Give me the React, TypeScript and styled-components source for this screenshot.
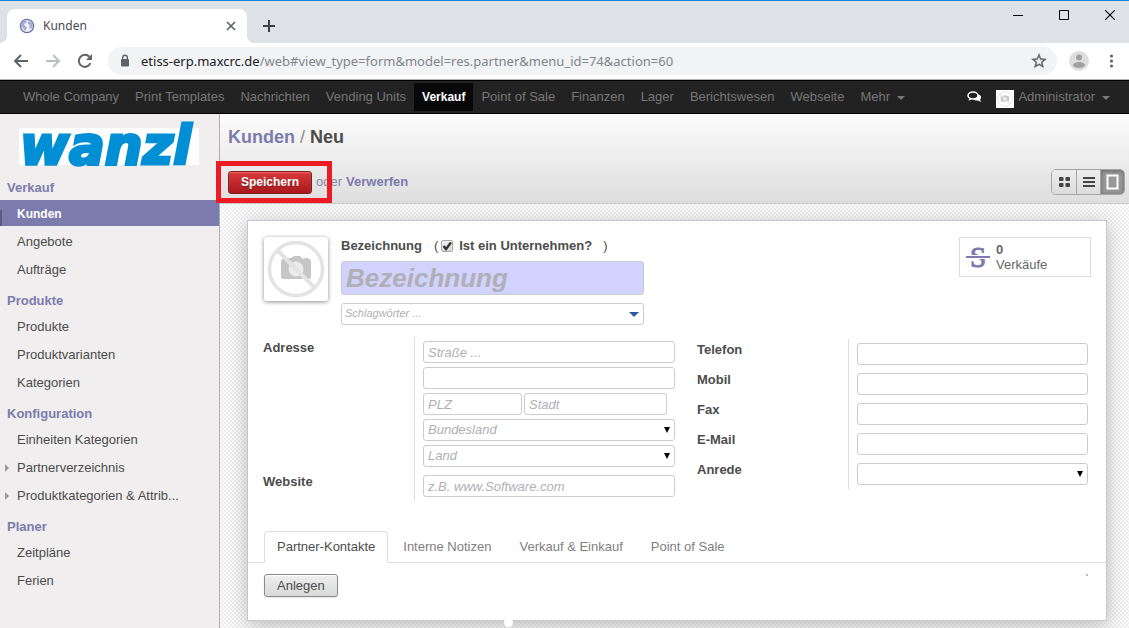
import React from 'react';
import styled, { createGlobalStyle, css } from 'styled-components';

const GlobalStyle = createGlobalStyle`
  *, *::before, *::after { box-sizing: border-box; }
  body { margin: 0; font-family: "Liberation Sans", Arial, sans-serif; font-size: 13px; line-height: 16px; color: #4c4c4c; }
  button, input, select { font: inherit; color: inherit; margin: 0; }
  a { color: inherit; text-decoration: none; }
  ul { list-style: none; margin: 0; padding: 0; }
`;

const Page = styled.div`
  min-height: 100vh;
  display: flex;
  flex-direction: column;
`;

/* ---------- browser window ---------- */

const TabStrip = styled.div`
  display: flex;
  height: 43px;
  padding-left: 7px;
  border-top: 1px solid #1883d7;
  background: #dee1e6;
  font-family: "Noto Sans", "Segoe UI", sans-serif;
`;

const BrowserTab = styled.div`
  position: relative;
  display: flex;
  align-items: center;
  width: 240px;
  margin-top: 8px;
  padding: 0 10px 0 12px;
  border-radius: 8px 8px 0 0;
  background: #fff;
  font-size: 12px;
  color: #45494d;
  &::before, &::after {
    content: "";
    position: absolute;
    bottom: 0;
    width: 8px;
    height: 8px;
  }
  &::before { left: -8px; background: radial-gradient(circle at 0 0, transparent 8px, #fff 8px); }
  &::after { right: -8px; background: radial-gradient(circle at 100% 0, transparent 8px, #fff 8px); }
`;

const TabTitle = styled.span`
  flex: 1;
  margin-left: 8px;
`;

const IconButton = styled.button`
  display: flex;
  align-items: center;
  justify-content: center;
  padding: 0;
  border: 0;
  background: none;
`;

const NewTab = styled(IconButton)`
  width: 28px;
  margin: 8px 0 0 8px;
`;

const WindowButtons = styled.div`
  display: flex;
  align-items: flex-start;
  margin-left: auto;
`;

const WindowButton = styled(IconButton)`
  width: 46px;
  height: 28px;
  &:last-child { width: 42px; padding-left: 4px; }
`;

const AddressBar = styled.div`
  display: flex;
  align-items: center;
  height: 37px;
  padding: 0 9px 0 12px;
  border-bottom: 1px solid #b6b4b6;
  background: #fff;
`;

const BrowserAction = styled(IconButton)`
  width: 18px;
  margin-right: 14px;
`;

const Omnibox = styled.div`
  display: flex;
  flex: 1;
  align-items: center;
  height: 28px;
  margin-right: 12px;
  padding: 0 9px 0 11px;
  border-radius: 14px;
  background: #f1f3f4;
  font-family: "Noto Sans", "Segoe UI", sans-serif;
  font-size: 13px;
  color: #80868b;
`;

const Url = styled.span`
  flex: 1;
  margin-left: 10px;
  b { font-weight: 400; color: #202124; }
`;

/* ---------- main navigation ---------- */

const Nav = styled.nav`
  display: flex;
  justify-content: space-between;
  height: 34px;
  padding: 0 19px 0 15px;
  border-top: 1px solid #000;
  border-bottom: 1px solid #000;
  background: #222;
  color: #777;
`;

const NavList = styled.ul`
  display: flex;
  align-items: center;
`;

const NavLink = styled.a<{ $active?: boolean }>`
  display: flex;
  align-items: center;
  height: 28px;
  padding: 0 8px;
  ${p => p.$active && css`
    background: #080808;
    color: #fff;
    font-size: 12px;
    font-weight: 700;
  `}
`;

const Caret = styled.span`
  margin: 2px 0 0 7px;
  border: 4px solid transparent;
  border-top-color: currentColor;
  border-bottom: 0;
`;

const UserMenu = styled.div`
  display: flex;
  align-items: center;
  > a { display: flex; align-items: center; }
  > a + a { margin-left: 14px; }
`;

const Thumb = styled.span`
  display: flex;
  margin: 4px 4px 0 0;
  background: #fff;
`;

/* ---------- sidebar ---------- */

const Body = styled.div`
  display: flex;
  flex: 1;
`;

const Sidebar = styled.aside`
  flex: none;
  width: 220px;
  padding-top: 14px;
  border-right: 1px solid #afafb6;
  background: #f0eeee;
`;

const Logo = styled.svg`
  display: block;
  margin: 0 0 12px 19px;
  background: #fff;
  overflow: visible;
`;

const SectionTitle = styled.h2`
  margin: 8px 0 3px;
  padding: 2px 0 0 7px;
  font-size: 13px;
  line-height: 18px;
  color: #7c7bad;
`;

const MenuItem = styled.a<{ $active?: boolean; $parent?: boolean }>`
  position: relative;
  display: block;
  margin-bottom: 2px;
  padding: 2px 0 0 17px;
  line-height: 24px;
  ${p => p.$active && css`
    background: #7c7bad;
    color: #fff;
    font-size: 12px;
    font-weight: 700;
    &::before {
      content: "";
      position: absolute;
      left: 0;
      top: 10px;
      width: 2px;
      height: 16px;
      background: #5b5a80;
    }
  `}
  ${p => p.$parent && css`
    &::before {
      content: "";
      position: absolute;
      left: 5px;
      top: 10px;
      border: 4px solid transparent;
      border-left-color: #999;
      border-right: 0;
    }
  `}
`;

/* ---------- view header ---------- */

const Main = styled.main`
  display: flex;
  flex: 1;
  flex-direction: column;
  min-width: 0;
`;

const ViewHeader = styled.header`
  height: 90px;
  padding: 12px 4px 0 8px;
  border-bottom: 1px solid #cacaca;
  background: linear-gradient(#fcfcfc, #dedede);
`;

const Breadcrumb = styled.h1`
  margin: 0;
  font-size: 18px;
  line-height: 22px;
  a { color: #7c7bad; }
  span { font-weight: 400; color: #8a8a8a; }
`;

const ActionRow = styled.div`
  display: flex;
  align-items: center;
  height: 26px;
  margin-top: 21px;
  color: #8a89a0;
`;

const SaveHighlight = styled.div`
  position: relative;
  display: flex;
  margin-right: 4px;
  &::after {
    content: "";
    position: absolute;
    inset: -10px -20px -9px -12px;
    border: 5px solid #ed1c24;
    pointer-events: none;
  }
`;

const PushButton = styled.button<{ $primary?: boolean }>`
  height: 23px;
  padding: 0 12px;
  border: 1px solid #8a8a8a;
  border-radius: 3px;
  background: linear-gradient(#efefef, #d8d8d8);
  box-shadow: 0 1px 2px rgba(0, 0, 0, 0.1), inset 0 1px 1px rgba(255, 255, 255, 0.8);
  line-height: 20px;
  ${p => p.$primary && css`
    border-color: #7f2121;
    background: linear-gradient(#d93b3b, #a8181d);
    box-shadow: inset 0 1px 1px rgba(255, 150, 150, 0.5);
    color: #fff;
    font-size: 12px;
    font-weight: 700;
    text-shadow: 0 1px 1px rgba(0, 0, 0, 0.3);
  `}
`;

const Discard = styled.a`
  margin-left: 4px;
  font-weight: 700;
  color: #7c7bad;
`;

const Switcher = styled.div`
  display: flex;
  height: 26px;
  margin-left: auto;
  border: 1px solid #a5a5a5;
  border-radius: 5px;
  overflow: hidden;
`;

const SwitchButton = styled(IconButton)<{ $on?: boolean }>`
  width: 24px;
  background: ${p => (p.$on ? '#999' : 'linear-gradient(#ededed, #dcdcdc)')};
  box-shadow: ${p => (p.$on ? 'inset 0 1px 4px rgba(0,0,0,.35)' : 'none')};
  & + & { border-left: 1px solid #a5a5a5; }
`;

/* ---------- form sheet ---------- */

const Canvas = styled.section`
  flex: 1;
  padding: 16px 22px 7px 27px;
  background: repeating-conic-gradient(#eee 0 25%, #fcfcfc 0 50%) 0 0 / 4px 4px;
`;

const Sheet = styled.form`
  position: relative;
  min-height: 401px;
  border: 1px solid #c8c8d3;
  background: #fff;
  box-shadow: 0 4px 20px rgba(0, 0, 0, 0.25);
`;

const Handle = styled.span`
  position: absolute;
  left: 256px;
  bottom: -7px;
  width: 9px;
  height: 9px;
  border-radius: 5px;
  background: #fff;
`;

const TitleRow = styled.div`
  display: flex;
  align-items: flex-start;
  padding: 16px 15px 0 16px;
`;

const Avatar = styled.div`
  display: flex;
  width: 64px;
  height: 64px;
  border-radius: 3px;
  box-shadow: 0 1px 4px rgba(0, 0, 0, 0.45);
`;

const TitleFields = styled.div`
  flex: none;
  width: 303px;
  margin-left: 13px;
`;

const TitleLabels = styled.div`
  display: flex;
  align-items: center;
  height: 18px;
  margin-bottom: 6px;
  label { font-weight: 700; }
`;

const Paren = styled.span<{ $open?: boolean }>`
  margin-left: ${p => (p.$open ? 12 : 11)}px;
`;

const CheckWrap = styled.span`
  position: relative;
  display: flex;
  margin: 0 6px 0 3px;
  svg { position: absolute; left: 1px; top: 1px; pointer-events: none; }
`;

const Checkbox = styled.input`
  appearance: none;
  width: 12px;
  height: 12px;
  border: 1px solid #a9a9a9;
  border-radius: 2px;
  background: linear-gradient(#efefef, #dcdcdc);
`;

const Field = styled.input`
  display: block;
  width: 100%;
  min-width: 0;
  height: 22px;
  padding: 0 4px;
  border: 1px solid #ccc;
  border-radius: 3px;
  background: #fff;
  &::placeholder { color: #afafb6; font-style: italic; opacity: 1; }
`;

const NameField = styled(Field)`
  height: 34px;
  margin-bottom: 8px;
  background: #d2d2ff;
  font-size: 26px;
  font-weight: 700;
`;

const TagField = styled(Field)`
  padding: 0 3px 2px;
  font-size: 11px;
`;

const Picker = styled.div<{ $blue?: boolean }>`
  position: relative;
  &::after {
    content: "";
    position: absolute;
    right: 5px;
    top: ${p => (p.$blue ? 9 : 8)}px;
    border: solid transparent;
    border-width: ${p => (p.$blue ? '5px 5px 0' : '6px 3px 0')};
    border-top-color: ${p => (p.$blue ? '#2c5a9c' : '#000')};
    pointer-events: none;
  }
`;

const Select = styled.select`
  display: block;
  appearance: none;
  width: 100%;
  height: 22px;
  padding: 0 4px;
  border: 1px solid #ccc;
  border-radius: 3px;
  background: #fff;
  color: #afafb6;
  font-style: italic;
`;

const StatButton = styled.button`
  display: flex;
  align-items: center;
  width: 132px;
  height: 40px;
  margin-left: auto;
  padding: 0 6px;
  border: 1px solid #dcdcdf;
  background: #fff;
  text-align: left;
  line-height: 15px;
  color: #666;
  svg { margin-right: 6px; }
  b { display: block; }
`;

const Groups = styled.div`
  display: flex;
  align-items: flex-start;
  gap: 22px;
  padding: 12px 18px 0 15px;
`;

const Group = styled.div<{ $grow: number }>`
  display: grid;
  flex: ${p => p.$grow} 1 0;
  grid-template-columns: 151px 1fr;
`;

const ContactGroup = styled(Group)`
  margin-top: 2px;
`;

const Row = styled.div`
  display: contents;
`;

const GroupLabel = styled.label`
  padding-top: 3px;
  font-weight: 700;
`;

const Cell = styled.div`
  display: flex;
  flex-direction: column;
  gap: 4px;
  padding: 4px 0 4px 8px;
  border-left: 1px solid #ddd;
`;

const CityRow = styled.div`
  display: grid;
  grid-template-columns: 99px 1fr;
  gap: 2px;
  padding-right: 8px;
`;

const Tabs = styled.div`
  display: flex;
  gap: 2px;
  margin-top: 30px;
  padding-left: 16px;
  border-bottom: 1px solid #ddd;
`;

const Tab = styled.button<{ $active?: boolean }>`
  height: 32px;
  margin-bottom: -1px;
  padding: 0 12px;
  border: 1px solid transparent;
  border-radius: 4px 4px 0 0;
  background: none;
  color: #808080;
  ${p => p.$active && css`
    border-color: #ddd #ddd #fff;
    background: #fff;
    color: #4c4c4c;
  `}
`;

const TabPanel = styled.div`
  display: flex;
  justify-content: space-between;
  padding: 11px 18px 0 16px;
`;

const Dot = styled.span`
  width: 2px;
  height: 2px;
  background: #bbb;
`;

function NoPhoto({ size }: { size: number }) {
  return (
    <svg width={size} height={size} viewBox="0 0 64 64" aria-hidden="true">
      <path d="M17 24q0-2 2-2h4l2-1h2l3-2h6l3 3h1l1-1h3l1 1q2 0 2 2v16q0 2-2 2H19q-2 0-2-2z" fill="#c6c6c6" />
      <circle cx="32" cy="32" r="7.5" fill="#ececec" />
      <circle cx="32" cy="32" r="26.500" fill="none" stroke="#e3e3e3" strokeWidth="3.5" />
      <path d="M14 14l36 36" stroke="#e3e3e3" strokeWidth="4" />
    </svg>
  );
}

const navItems = ['Whole Company', 'Print Templates', 'Nachrichten', 'Vending Units', 'Verkauf', 'Point of Sale', 'Finanzen', 'Lager', 'Berichtswesen', 'Webseite'];

const sections = [
  { title: 'Verkauf', items: ['Kunden', 'Angebote', 'Aufträge'] },
  { title: 'Produkte', items: ['Produkte', 'Produktvarianten', 'Kategorien'] },
  { title: 'Konfiguration', items: ['Einheiten Kategorien', 'Partnerverzeichnis', 'Produktkategorien & Attrib...'] },
  { title: 'Planer', items: ['Zeitpläne', 'Ferien'] },
];

const parents = ['Partnerverzeichnis', 'Produktkategorien & Attrib...'];
const contactFields = ['Telefon', 'Mobil', 'Fax', 'E-Mail'];
const sheetTabs = ['Partner-Kontakte', 'Interne Notizen', 'Verkauf & Einkauf', 'Point of Sale'];

function BrowserChrome() {
  return (
    <>
      <TabStrip>
        <BrowserTab>
          <svg width="16" height="16" viewBox="0 0 16 16">
            <circle cx="8" cy="8" r="6.600" fill="#f0f2fa" stroke="#6573ad" strokeWidth="1.300" />
            <path d="M3 4l3-2 2 1-1 2-2 1 1 2 2 1-1 3-1 1-2-3-2-2zM9 3l3 1 2 3-1 3-2 1-1-2 1-2-2-1z" fill="#a4aed2" />
          </svg>
          <TabTitle>Kunden</TabTitle>
          <IconButton aria-label="Tab schließen">
            <svg width="12" height="12" viewBox="0 0 12 12"><path d="M2 2l8 8M10 2l-8 8" stroke="#5f6368" strokeWidth="1.7" /></svg>
          </IconButton>
        </BrowserTab>
        <NewTab aria-label="Neuer Tab">
          <svg width="12" height="12" viewBox="0 0 12 12"><path d="M6 0v12M0 6h12" stroke="#3c4043" strokeWidth="2" /></svg>
        </NewTab>
        <WindowButtons>
          <WindowButton aria-label="Minimieren"><svg width="10" height="10"><path d="M0 5.5h10" stroke="#000" /></svg></WindowButton>
          <WindowButton aria-label="Maximieren"><svg width="10" height="10"><path d="M.5.5h9v9h-9z" fill="none" stroke="#000" /></svg></WindowButton>
          <WindowButton aria-label="Schließen"><svg width="10" height="10"><path d="M0 0l10 10M10 0L0 10" stroke="#000" strokeWidth="1.1" /></svg></WindowButton>
        </WindowButtons>
      </TabStrip>
      <AddressBar>
        <BrowserAction aria-label="Zurück">
          <svg width="16" height="16" viewBox="0 0 16 16"><path d="M15 8H2M8 2L2 8l6 6" fill="none" stroke="#5f6368" strokeWidth="2" /></svg>
        </BrowserAction>
        <BrowserAction aria-label="Vorwärts">
          <svg width="16" height="16" viewBox="0 0 16 16"><path d="M1 8h13M8 2l6 6-6 6" fill="none" stroke="#bdc0c3" strokeWidth="2" /></svg>
        </BrowserAction>
        <BrowserAction aria-label="Neu laden">
          <svg width="16" height="16" viewBox="0 0 16 16">
            <path d="M13.4 10.2A6 6 0 1 1 12.3 3.8" fill="none" stroke="#5f6368" strokeWidth="2" />
            <path d="M15 1v6H9z" fill="#5f6368" />
          </svg>
        </BrowserAction>
        <Omnibox>
          <svg width="12" height="14" viewBox="0 0 12 14">
            <rect x="2" y="5" width="8" height="7.5" rx="1" fill="#5f6368" />
            <path d="M3.700 6V3.5a2.300 2.300 0 0 1 4.600 0V6" fill="none" stroke="#5f6368" strokeWidth="1.4" />
          </svg>
          <Url><b>etiss-erp.maxcrc.de</b>/web#view_type=form&amp;model=res.partner&amp;menu_id=74&amp;action=60</Url>
          <IconButton aria-label="Lesezeichen">
            <svg width="18" height="18" viewBox="0 0 24 24"><path d="M22 9.24l-7.19-.62L12 2 9.19 8.63 2 9.24l5.46 4.73L5.82 21 12 17.27 18.18 21l-1.63-7.03L22 9.24zM12 15.4l-3.76 2.27 1-4.28-3.32-2.88 4.38-.38L12 6.1l1.71 4.04 4.38.38-3.32 2.88 1 4.28L12 15.4z" fill="#5f6368" stroke="#5f6368" strokeWidth=".5" /></svg>
          </IconButton>
        </Omnibox>
        <IconButton aria-label="Profil">
          <svg width="20" height="20" viewBox="0 0 20 20">
            <circle cx="10" cy="10" r="10" fill="#dedede" />
            <circle cx="10" cy="6.5" r="3" fill="#a0a0a0" />
            <ellipse cx="10" cy="14" rx="6" ry="3" fill="#a0a0a0" />
          </svg>
        </IconButton>
        <IconButton aria-label="Menü">
          <svg width="31" height="16" viewBox="0 0 31 16">
            <g fill="#5f6368"><circle cx="22.500" cy="3" r="1.6" /><circle cx="22.500" cy="8" r="1.6" /><circle cx="22.500" cy="13" r="1.6" /></g>
          </svg>
        </IconButton>
      </AddressBar>
    </>
  );
}

export default function App() {
  return (
    <Page>
      <GlobalStyle />
      <BrowserChrome />
      <Nav>
        <NavList>
          {navItems.map(item => (
            <li key={item}><NavLink href="#" $active={item === 'Verkauf'}>{item}</NavLink></li>
          ))}
          <li><NavLink href="#">Mehr<Caret /></NavLink></li>
        </NavList>
        <UserMenu>
          <a href="#" aria-label="Nachrichten">
            <svg width="15" height="12" viewBox="0 0 15 12">
              <path d="M11.500 3.500q3 1 2.500 3.500-.3 1-1 1.500l1 2.500-3-1.500q-3 .4-4.500-1z" fill="#fff" />
              <ellipse cx="6" cy="4.500" rx="5" ry="3.500" fill="#222" stroke="#fff" strokeWidth="1.500" />
              <path d="M2.500 7L1.500 9.800l3.500-1.600z" fill="#fff" />
            </svg>
          </a>
          <a href="#"><Thumb><NoPhoto size={18} /></Thumb>Administrator<Caret /></a>
        </UserMenu>
      </Nav>
      <Body>
        <Sidebar>
          <Logo width="180" height="37" viewBox="0 0 180 37" role="img" aria-label="wanzl">
            <text x="1" y="36" fontFamily="DejaVu Sans" fontWeight="700" fontStyle="italic" fontSize="53" fill="#008fd5" stroke="#008fd5" strokeWidth="3">wanzl</text>
          </Logo>
          {sections.map(section => (
            <React.Fragment key={section.title}>
              <SectionTitle>{section.title}</SectionTitle>
              {section.items.map(item => (
                <MenuItem key={item} href="#" $active={item === 'Kunden'} $parent={parents.includes(item)}>{item}</MenuItem>
              ))}
            </React.Fragment>
          ))}
        </Sidebar>
        <Main>
          <ViewHeader>
            <Breadcrumb><a href="#">Kunden</a> <span>/</span> Neu</Breadcrumb>
            <ActionRow>
              <SaveHighlight><PushButton $primary>Speichern</PushButton></SaveHighlight>
              oder <Discard href="#">Verwerfen</Discard>
              <Switcher>
                <SwitchButton aria-label="Kanban">
                  <svg width="11" height="10"><g fill="#444"><rect width="4.500" height="4" rx="1" /><rect x="6.500" width="4.500" height="4" rx="1" /><rect y="6" width="4.500" height="4" rx="1" /><rect x="6.500" y="6" width="4.500" height="4" rx="1" /></g></svg>
                </SwitchButton>
                <SwitchButton aria-label="Liste">
                  <svg width="12" height="10"><path d="M0 1h12M0 5h12M0 9h12" stroke="#444" strokeWidth="2" /></svg>
                </SwitchButton>
                <SwitchButton aria-label="Formular" $on>
                  <svg width="13" height="16"><path d="M1.500 1.500h10v13h-10z" fill="none" stroke="#fff" strokeWidth="2" /></svg>
                </SwitchButton>
              </Switcher>
            </ActionRow>
          </ViewHeader>
          <Canvas>
            <Sheet onSubmit={e => e.preventDefault()}>
              <TitleRow>
                <Avatar><NoPhoto size={64} /></Avatar>
                <TitleFields>
                  <TitleLabels>
                    <label htmlFor="name">Bezeichnung</label>
                    <Paren $open>(</Paren>
                    <CheckWrap>
                      <Checkbox id="company" type="checkbox" defaultChecked />
                      <svg width="10" height="10" viewBox="0 0 10 10"><path d="M1.500 5l2.500 3L9 1.500" fill="none" stroke="#333" strokeWidth="2.400" /></svg>
                    </CheckWrap>
                    <label htmlFor="company">Ist ein Unternehmen?</label>
                    <Paren>)</Paren>
                  </TitleLabels>
                  <NameField id="name" placeholder="Bezeichnung" />
                  <Picker $blue><TagField aria-label="Schlagwörter" placeholder="Schlagwörter ..." /></Picker>
                </TitleFields>
                <StatButton type="button">
                  <svg width="24" height="38" viewBox="0 0 24 38">
                    <text x="12" y="29" textAnchor="middle" fontFamily="Liberation Serif" fontSize="29" fill="#7c7bad" stroke="#7c7bad">S</text>
                    <path d="M0 19h24" stroke="#fff" strokeWidth="4" />
                    <path d="M0 19h24" stroke="#7c7bad" strokeWidth="2" />
                  </svg>
                  <span><b>0</b>Verkäufe</span>
                </StatButton>
              </TitleRow>
              <Groups>
                <Group $grow={412}>
                  <Row>
                    <GroupLabel htmlFor="street">Adresse</GroupLabel>
                    <Cell>
                      <Field id="street" placeholder="Straße ..." />
                      <Field aria-label="Straße 2" />
                      <CityRow>
                        <Field aria-label="PLZ" placeholder="PLZ" />
                        <Field aria-label="Stadt" placeholder="Stadt" />
                      </CityRow>
                      <Picker><Select aria-label="Bundesland"><option>Bundesland</option></Select></Picker>
                      <Picker><Select aria-label="Land"><option>Land</option></Select></Picker>
                    </Cell>
                  </Row>
                  <Row>
                    <GroupLabel htmlFor="website">Website</GroupLabel>
                    <Cell><Field id="website" placeholder="z.B. www.Software.com" /></Cell>
                  </Row>
                </Group>
                <ContactGroup $grow={391}>
                  {contactFields.map(name => (
                    <Row key={name}>
                      <GroupLabel htmlFor={name}>{name}</GroupLabel>
                      <Cell><Field id={name} /></Cell>
                    </Row>
                  ))}
                  <Row>
                    <GroupLabel htmlFor="title">Anrede</GroupLabel>
                    <Cell><Picker><Select id="title"><option></option></Select></Picker></Cell>
                  </Row>
                </ContactGroup>
              </Groups>
              <Tabs role="tablist">
                {sheetTabs.map((tab, i) => (
                  <Tab key={tab} type="button" role="tab" aria-selected={i === 0} $active={i === 0}>{tab}</Tab>
                ))}
              </Tabs>
              <TabPanel role="tabpanel">
                <PushButton type="button">Anlegen</PushButton>
                <Dot />
              </TabPanel>
              <Handle />
            </Sheet>
          </Canvas>
        </Main>
      </Body>
    </Page>
  );
}
